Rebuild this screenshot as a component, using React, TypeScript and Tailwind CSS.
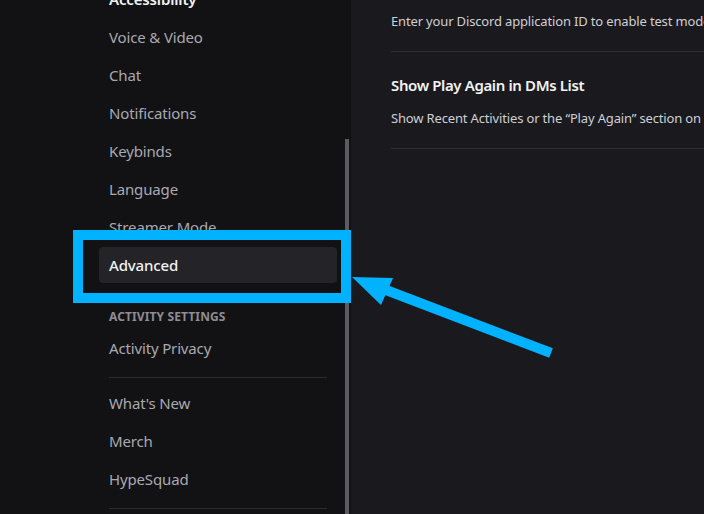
import React from 'react'

const font = { fontFamily: '"Noto Sans", "Open Sans", sans-serif' }

function NavItem({ label, active = false, bold = false }: { label: string; active?: boolean; bold?: boolean }) {
  return (
    <div
      className={`flex h-[36px] shrink-0 items-center rounded-[4px] px-[10px] text-[15px] tracking-[-0.01em] ${
        active ? 'bg-[#242428] font-medium text-[#f2f2f4]' : bold ? 'font-semibold text-[#f2f2f4]' : 'text-[#a9a9b0]'
      }`}
    >
      {label}
    </div>
  )
}

export default function App() {
  return (
    <div className="relative flex h-[514px] w-[704px] overflow-hidden bg-[#1a1a1e]" style={font}>
      {/* Sidebar */}
      <aside className="flex h-full w-[351px] shrink-0 bg-[#121214]">
        <nav className="ml-[99px] mt-[-19px] flex w-[238px] flex-col self-start">
          <div className="flex flex-col gap-[2px]">
            <NavItem label="Accessibility" bold />
            <NavItem label="Voice & Video" />
            <NavItem label="Chat" />
            <NavItem label="Notifications" />
            <NavItem label="Keybinds" />
            <NavItem label="Language" />
            <NavItem label="Streamer Mode" />
            <NavItem label="Advanced" active />
          </div>
          <div className="px-[10px] pb-[5px] pt-[26px] text-[12px] font-bold uppercase leading-[16px] tracking-[0.01em] text-[#8d8d95]">
            Activity Settings
          </div>
          <NavItem label="Activity Privacy" />
          <div className="mx-[10px] mb-[7px] mt-[11px] h-px bg-[#2a2a2f]" />
          <div className="flex flex-col gap-[2px]">
            <NavItem label="What's New" />
            <NavItem label="Merch" />
            <NavItem label="HypeSquad" />
          </div>
          <div className="mx-[10px] my-[11px] h-px bg-[#2a2a2f]" />
        </nav>
        <div className="ml-[8px] mt-[139px] w-[4px] bg-[#5b5b62]" />
      </aside>

      {/* Content */}
      <main className="flex-1 overflow-hidden pl-[40px]">
        <div className="w-[600px]">
          <p className="mt-[11px] whitespace-nowrap text-[13px] leading-[20px] tracking-[-0.012em] text-[#cfcfd4]">
            Enter your Discord application ID to enable test mode for that game.
          </p>
          <div className="mt-[20px] h-px bg-[#2c2c31]" />
          <h3 className="mt-[23px] whitespace-nowrap text-[15px] font-semibold leading-[20px] tracking-[-0.025em] text-[#f2f2f4]">
            Show Play Again in DMs List
          </h3>
          <p className="mt-[13px] whitespace-nowrap text-[13px] leading-[20px] tracking-[-0.012em] text-[#cfcfd4]">
            Show Recent Activities or the “Play Again” section on the DMs list.
          </p>
          <div className="mt-[20px] h-px bg-[#2c2c31]" />
        </div>
      </main>

      {/* Annotation */}
      <div className="pointer-events-none absolute left-[73px] top-[230px] h-[73px] w-[278px] border-[10px] border-[#00b2ff]" />
      <svg className="pointer-events-none absolute inset-0" width="704" height="514" viewBox="0 0 704 514">
        <line x1="386" y1="290" x2="551" y2="353" stroke="#00b2ff" strokeWidth="10" />
        <polygon points="352,277 393,278 381,305" fill="#00b2ff" />
      </svg>
    </div>
  )
}
